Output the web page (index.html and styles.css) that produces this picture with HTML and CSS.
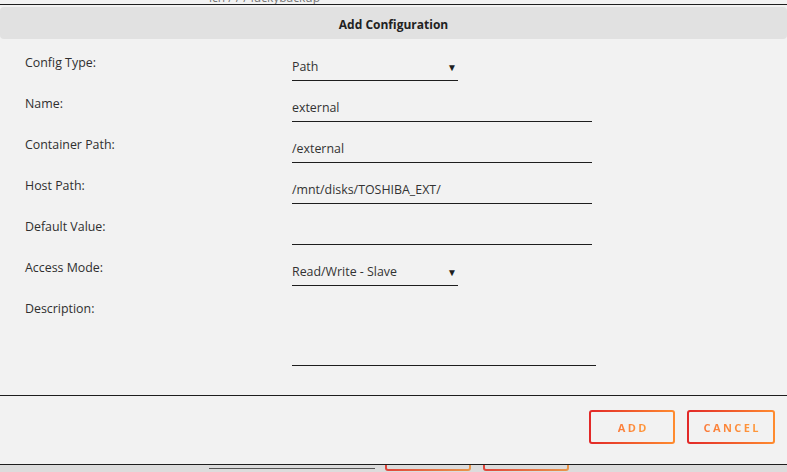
FILE: index.html
```html
<!DOCTYPE html>
<html>
<head>
<meta charset="utf-8">
<link rel="stylesheet" href="styles.css">
</head>
<body>
<div class="bg-top"><span class="bg-text">ich / / / luckybackup</span></div>
<div class="dialog">
  <div class="titlebar">Add Configuration</div>
  <div class="form">
    <div class="row">
      <div class="label">Config Type:</div>
      <div class="field select"><span class="value">Path</span><span class="arrow">▼</span></div>
    </div>
    <div class="row">
      <div class="label">Name:</div>
      <div class="field text"><span class="value">external</span></div>
    </div>
    <div class="row">
      <div class="label">Container Path:</div>
      <div class="field text"><span class="value">/external</span></div>
    </div>
    <div class="row">
      <div class="label">Host Path:</div>
      <div class="field text"><span class="value">/mnt/disks/TOSHIBA_EXT/</span></div>
    </div>
    <div class="row">
      <div class="label">Default Value:</div>
      <div class="field text"><span class="value"></span></div>
    </div>
    <div class="row">
      <div class="label">Access Mode:</div>
      <div class="field select"><span class="value">Read/Write - Slave</span><span class="arrow">▼</span></div>
    </div>
    <div class="row desc">
      <div class="label">Description:</div>
      <div class="field textarea"></div>
    </div>
  </div>
  <div class="footer">
    <button class="btn btn-add"><span class="btn-text">ADD</span></button>
    <button class="btn btn-cancel"><span class="btn-text">CANCEL</span></button>
  </div>
</div>
<div class="bg-bottom">
  <div class="bg-line"></div>
  <div class="bg-btn"></div>
  <div class="bg-btn"></div>
</div>
</body>
</html>
```
FILE: styles.css
```css
html, body {
  margin: 0;
  padding: 0;
}
body {
  width: 787px;
  height: 472px;
  overflow: hidden;
  background: #f2f2f2;
  font-family: "Open Sans", "Noto Sans", sans-serif;
  font-size: 12px;
  color: #333;
}
.bg-top {
  height: 4px;
  overflow: hidden;
}
.bg-text {
  display: block;
  margin-top: -9px;
  padding-left: 209px;
  line-height: 14px;
  font-size: 12px;
  color: #777;
}
.dialog {
  height: 459px;
  border-top: 1px solid #1e1e1e;
  border-bottom: 1px solid #1e1e1e;
  display: flex;
  flex-direction: column;
}
.titlebar {
  box-sizing: border-box;
  margin-top: 2px;
  height: 32px;
  padding-top: 3px;
  background: #e1e1e1;
  border-radius: 4px;
  display: flex;
  align-items: center;
  justify-content: center;
  font-weight: 700;
  font-size: 12px;
  color: #222;
}
.form {
  padding-top: 2px;
  height: 354px;
}
.row {
  display: grid;
  grid-template-columns: 292px 1fr;
  height: 41px;
  align-items: start;
}
.label {
  padding-left: 25px;
  padding-top: 14px;
  line-height: 16px;
  font-size: 12.4px;
  color: #2f2f2f;
}
.field {
  box-sizing: border-box;
  height: 40px;
  border-bottom: 1px solid #1e1e1e;
  display: flex;
  align-items: flex-end;
  padding-bottom: 5px;
  line-height: 16px;
  font-size: 12.4px;
  color: #333;
}
.field.text {
  width: 300px;
}
.field.select {
  width: 166px;
  justify-content: space-between;
}
.arrow {
  font-size: 10px;
  color: #1e1e1e;
  padding-right: 1px;
  line-height: 16px;
}
.row.desc {
  height: 80px;
}
.field.textarea {
  width: 304px;
  height: 79px;
}
.footer {
  flex: 1;
  border-top: 1px solid #1e1e1e;
  display: flex;
  justify-content: flex-end;
  align-items: flex-start;
  gap: 12px;
  padding: 14px 12px 0 0;
}
.btn {
  box-sizing: border-box;
  height: 34px;
  padding: 0;
  border: 2px solid transparent;
  border-radius: 3px;
  background:
    linear-gradient(#f2f2f2, #f2f2f2) padding-box,
    linear-gradient(90deg, #e22828, #ff8c2f) border-box;
  font-family: "Open Sans", sans-serif;
  font-weight: 700;
  font-size: 11px;
  letter-spacing: 2.4px;
  text-indent: 2.4px;
  cursor: pointer;
}
.btn-add {
  width: 86px;
}
.btn-cancel {
  width: 88px;
}
.btn-text {
  background: linear-gradient(90deg, #fb7b3a, #ff9a3a);
  -webkit-background-clip: text;
  background-clip: text;
  color: transparent;
}
.bg-bottom {
  height: 7px;
  background: #dcdcdc;
  display: flex;
  align-items: flex-start;
  overflow: hidden;
}
.bg-line {
  margin-left: 209px;
  margin-top: 3px;
  width: 166px;
  height: 1px;
  background: #555;
}
.bg-btn {
  box-sizing: border-box;
  margin-top: -26px;
  margin-left: 10px;
  width: 86px;
  height: 32px;
  border: 2px solid transparent;
  border-radius: 3px;
  background:
    linear-gradient(#dcdcdc, #dcdcdc) padding-box,
    linear-gradient(90deg, #e0443a, #e8964a) border-box;
}
.bg-btn + .bg-btn {
  margin-left: 12px;
}
```
